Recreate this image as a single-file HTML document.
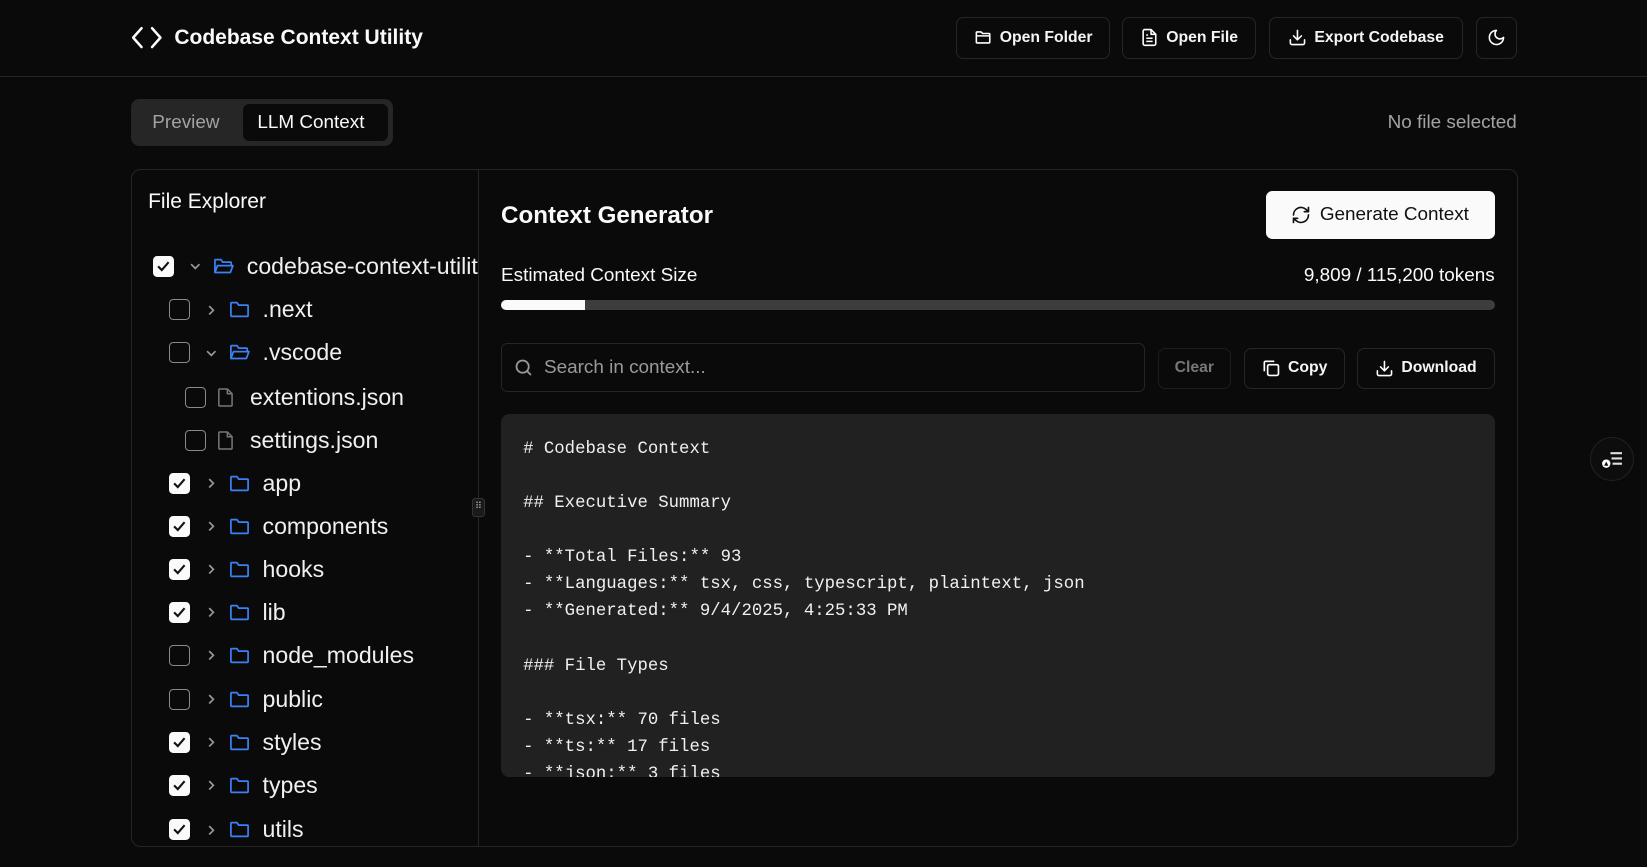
<!DOCTYPE html>
<html><head><meta charset="utf-8"><style>
*{box-sizing:border-box;margin:0;padding:0}
html,body{width:1647px;height:867px;overflow:hidden;background:#0a0a0a}
#w{position:relative;width:1568px;height:825px;zoom:1.0504;font-family:"Liberation Sans",sans-serif;color:#fafafa}
.a{position:absolute}
.btn{position:absolute;border:1px solid #262626;border-radius:7px;display:flex;align-items:center;justify-content:center;gap:7px;font-size:15px;font-weight:bold;color:#f5f5f5;background:#0a0a0a}
svg{display:block}
.row{position:absolute;height:30px;display:flex;align-items:center;font-size:22px;color:#f0f0f0}
.cb{width:20px;height:20px;border:1.5px solid #8a8a8a;border-radius:4px;margin-right:10px;flex:none}
.cb.on{background:#fafafa;border-color:#fafafa;display:flex;align-items:center;justify-content:center}
.ch{width:20px;flex:none;margin-right:7px}
.ic{width:20px;flex:none;margin-right:12px}
pre{font-family:"Liberation Mono",monospace;font-size:16.5px;line-height:25.8px;color:#f0f0f0}
</style></head><body><div id="w">
<svg class="a" style="left:124px;top:24px" width="32" height="24" viewBox="0 0 32 24" fill="none" stroke="#fff" stroke-width="2.4" stroke-linecap="round" stroke-linejoin="round"><path d="M11 3 3 12l8 9M21 3l8 9-8 9"/></svg>
<div class="a" style="left:166px;top:25px;font-size:20px;font-weight:bold">Codebase Context Utility</div>
<div class="btn" style="left:910px;top:16px;width:147px;height:40px"><svg width="18" height="18" viewBox="0 0 24 24" fill="none" stroke="#fff" stroke-width="2" stroke-linejoin="round"><path d="M3 6a1 1 0 0 1 1-1h5l2 2h8a1 1 0 0 1 1 1v10a1 1 0 0 1-1 1H4a1 1 0 0 1-1-1z M3 10h18"/></svg>Open Folder</div>
<div class="btn" style="left:1068px;top:16px;width:128px;height:40px"><svg width="18" height="18" viewBox="0 0 24 24" fill="none" stroke="#fff" stroke-width="2" stroke-linejoin="round"><path d="M14 2H6a2 2 0 0 0-2 2v16a2 2 0 0 0 2 2h12a2 2 0 0 0 2-2V8z M14 2v6h6 M8 13h8M8 17h8M8 9h2"/></svg>Open File</div>
<div class="btn" style="left:1208px;top:16px;width:185px;height:40px"><svg width="18" height="18" viewBox="0 0 24 24" fill="none" stroke="#fff" stroke-width="2" stroke-linecap="round" stroke-linejoin="round"><path d="M21 15v4a2 2 0 0 1-2 2H5a2 2 0 0 1-2-2v-4M7 10l5 5 5-5M12 15V3"/></svg>Export Codebase</div>
<div class="btn" style="left:1405px;top:16px;width:39px;height:40px"><svg width="18" height="18" viewBox="0 0 24 24" fill="none" stroke="#fff" stroke-width="2" stroke-linejoin="round"><path d="M12 3a6 6 0 0 0 9 9 9 9 0 1 1-9-9z"/></svg></div>
<div class="a" style="left:0;top:72px;width:1568px;height:1px;background:#262626"></div>
<div class="a" style="left:125px;top:94px;width:249px;height:45px;background:#262626;border-radius:8px"></div>
<div class="a" style="left:231px;top:99px;width:138px;height:35px;background:#0a0a0a;border-radius:6px"></div>
<div class="a" style="left:145px;top:107px;font-size:18px;color:#a3a3a3">Preview</div>
<div class="a" style="left:245px;top:107px;font-size:18px;color:#fafafa">LLM Context</div>
<div class="a" style="right:124px;top:107px;font-size:18px;color:#a3a3a3">No file selected</div>
<div class="a" style="left:125px;top:161px;width:1320px;height:645px;border:1px solid #262626;border-radius:9px"></div>
<div class="a" style="left:455px;top:162px;width:1px;height:643px;background:#262626"></div>
<div class="a" style="left:449px;top:474px;width:13px;height:18px;border:1px solid #333;border-radius:3px;background:#1a1a1a;font-size:9px;color:#aaa;text-align:center;line-height:16px">⠿</div>
<div class="a" style="left:141px;top:181px;font-size:20px">File Explorer</div>
<div class="a" style="left:130px;top:162px;width:325px;height:643px;overflow:hidden">
<div id="tree"></div>
</div>
<div class="a" style="left:477px;top:192px;font-size:23px;font-weight:bold">Context Generator</div>
<div class="a" style="left:1205px;top:182px;width:218px;height:46px;background:#fafafa;border-radius:6px;display:flex;align-items:center;justify-content:center;gap:8px;color:#111;font-size:18px"><svg width="19" height="19" viewBox="0 0 24 24" fill="none" stroke="#111" stroke-width="2" stroke-linecap="round" stroke-linejoin="round"><path d="M3 12a9 9 0 0 1 15-6.7L21 8M21 3v5h-5M21 12a9 9 0 0 1-15 6.7L3 16M8 16H3v5"/></svg>Generate Context</div>
<div class="a" style="left:477px;top:252px;font-size:18px">Estimated Context Size</div>
<div class="a" style="right:145px;top:252px;font-size:18px">9,809 / 115,200 tokens</div>
<div class="a" style="left:477px;top:286px;width:946px;height:9px;background:#3d3d3d;border-radius:5px;overflow:hidden"><div style="width:80px;height:9px;background:#fafafa"></div></div>
<div class="a" style="left:477px;top:327px;width:613px;height:46px;border:1px solid #262626;border-radius:6px;display:flex;align-items:center;padding-left:10px;gap:10px;font-size:18px;color:#9a9a9a"><svg width="20" height="20" viewBox="0 0 24 24" fill="none" stroke="#9a9a9a" stroke-width="2" stroke-linecap="round"><circle cx="11" cy="11" r="7"/><path d="m20 20-4-4"/></svg>Search in context...</div>
<div class="btn" style="left:1102px;top:331px;width:70px;height:39px;color:#777;border-color:#1d1d1d">Clear</div>
<div class="btn" style="left:1184px;top:331px;width:96px;height:39px"><svg width="19" height="19" viewBox="0 0 24 24" fill="none" stroke="#fff" stroke-width="2" stroke-linejoin="round"><rect x="8" y="8" width="13" height="13" rx="2"/><path d="M4 16V5a2 2 0 0 1 1-1h11"/></svg>Copy</div>
<div class="btn" style="left:1292px;top:331px;width:131px;height:39px"><svg width="18" height="18" viewBox="0 0 24 24" fill="none" stroke="#fff" stroke-width="2" stroke-linecap="round" stroke-linejoin="round"><path d="M21 15v4a2 2 0 0 1-2 2H5a2 2 0 0 1-2-2v-4M7 10l5 5 5-5M12 15V3"/></svg>Download</div>
<div class="a" style="left:477px;top:394px;width:946px;height:346px;background:#212121;border-radius:8px;overflow:hidden;padding:21px 0 0 21px">
<pre># Codebase Context

## Executive Summary

- **Total Files:** 93
- **Languages:** tsx, css, typescript, plaintext, json
- **Generated:** 9/4/2025, 4:25:33 PM

### File Types

- **tsx:** 70 files
- **ts:** 17 files
- **json:** 3 files</pre></div>
<div class="a" style="left:1514px;top:416px;width:42px;height:42px;border-radius:50%;background:#0d0d0d;border:1px solid #222;display:flex;align-items:center;justify-content:center"><svg width="22" height="18" viewBox="0 0 22 18"><path d="M9 3h11M10 8h10M11 13h9" stroke="#ddd" stroke-width="2"/><circle cx="5" cy="13" r="4" fill="#fff"/><path d="M3 15l2-4 2 4z" fill="#111"/></svg></div>
</div>
<script>
const F='<svg width="20" height="18" viewBox="0 0 24 22" fill="none" stroke="#3b82f6" stroke-width="2" stroke-linejoin="round"><path d="M2 4a1 1 0 0 1 1-1h6l2 3h10a1 1 0 0 1 1 1v11a1 1 0 0 1-1 1H3a1 1 0 0 1-1-1z"/></svg>';
const FO='<svg width="20" height="18" viewBox="0 0 24 22" fill="none" stroke="#3b82f6" stroke-width="2" stroke-linejoin="round"><path d="M2 18V4a1 1 0 0 1 1-1h6l2 3h9a1 1 0 0 1 1 1v2M2 18l3-8h18l-3 8z"/></svg>';
const FI='<svg width="18" height="20" viewBox="0 0 20 22" fill="none" stroke="#777" stroke-width="1.6" stroke-linejoin="round"><path d="M12 2H4a1 1 0 0 0-1 1v16a1 1 0 0 0 1 1h12a1 1 0 0 0 1-1V7z M12 2v5h5"/></svg>';
const R='<svg width="12" height="12" viewBox="0 0 12 12" fill="none" stroke="#999" stroke-width="1.6"><path d="M4 2l4 4-4 4"/></svg>';
const D='<svg width="12" height="12" viewBox="0 0 12 12" fill="none" stroke="#999" stroke-width="1.6"><path d="M2 4l4 4 4-4"/></svg>';
const CK='<svg width="14" height="14" viewBox="0 0 14 14" fill="none" stroke="#111" stroke-width="2"><path d="M2 7l3.5 3.5L12 3"/></svg>';
const rows=[[0,1,'d',FO,'codebase-context-utility'],[1,0,'r',F,'.next'],[1,0,'d',FO,'.vscode'],[2,0,'',FI,'extentions.json'],[2,0,'',FI,'settings.json'],[1,1,'r',F,'app'],[1,1,'r',F,'components'],[1,1,'r',F,'hooks'],[1,1,'r',F,'lib'],[1,0,'r',F,'node_modules'],[1,0,'r',F,'public'],[1,1,'r',F,'styles'],[1,1,'r',F,'types'],[1,1,'r',F,'utils']];
const ys=[254,295,336,378,419,460,501,542,583,624,666,707,748,790];
let h='';rows.forEach((r,i)=>{const x=[146,161,176][r[0]]-130;h+=`<div class="row" style="left:${x}px;top:${ys[i]-162-15}px;white-space:nowrap"><div class="cb${r[1]?' on':''}">${r[1]?CK:''}</div>${r[2]?`<div class="ch" style="padding-left:4px">${r[2]=='d'?D:R}</div>`:''}<div class="ic">${r[3]}</div>${r[4]}</div>`});
document.getElementById('tree').innerHTML=h;
</script>
</body></html>
